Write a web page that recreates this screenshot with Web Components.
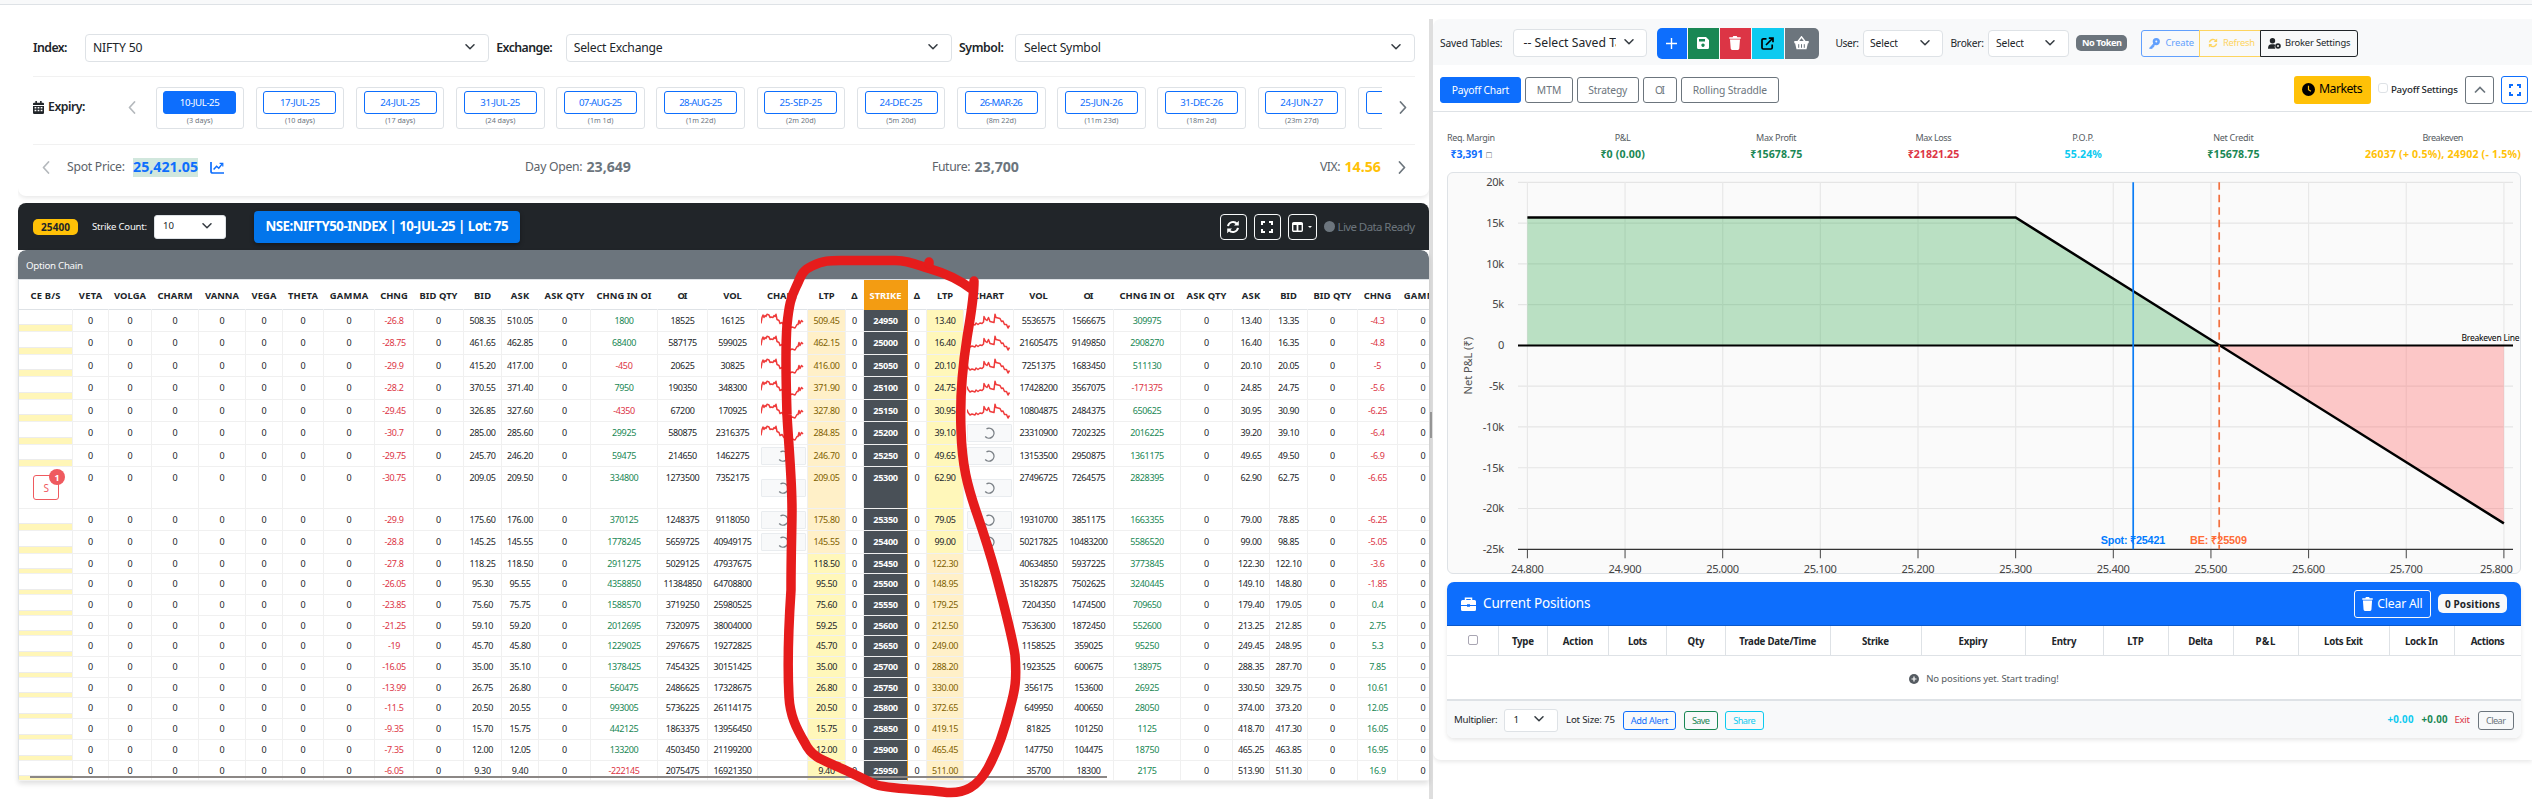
<!DOCTYPE html>
<html lang="en">
<head>
<meta charset="utf-8">
<title>Option Chain</title>
<style>
html,body{margin:0;background:#fff}
body{width:2532px;height:799px;overflow:hidden;font-family:"Noto Sans","Open Sans",sans-serif;color:#212529}
</style>
</head>
<body>
<trading-app></trading-app>
<script>
const BASE = `<style>
*{box-sizing:border-box}
:host{display:block;font-family:"Noto Sans","Open Sans",sans-serif;line-height:1}
.row{display:flex;align-items:center}
.f{display:inline-block;white-space:nowrap;letter-spacing:0}
svg{display:block;flex:none}
b{font-weight:700}
</style>`;

/* Tightens or loosens tracking so that a label fills the width named in data-w. */
function fit(root){
  root.querySelectorAll('[data-w]').forEach(el=>{
    const n = el.textContent.length, w = +el.dataset.w;
    if(n < 2) return;
    const nat = el.getBoundingClientRect().width;
    const ls = (w - nat) / (n - 1);
    el.style.letterSpacing = ls + 'px';
    el.style.marginRight = -ls + 'px';
  });
}
const t = (text,w,style='') => `<span class="f" data-w="${w}" style="${style}">${text}</span>`;

class Base extends HTMLElement{
  connectedCallback(){
    if(this.shadowRoot) return;
    const r = this.attachShadow({mode:'open'});
    r.innerHTML = BASE + this.view();
    fit(r);
  }
  view(){ return ''; }
}
const ICON = {
  calendar:`<svg width="11" height="13" viewBox="0 0 448 512" preserveAspectRatio="none" fill="currentColor"><path fill-rule="evenodd" d="M96 0h64v64h128V0h64v64h48q48 0 48 48v48H0v-48q0-48 48-48h48zM0 192h448v272q0 48-48 48H48q-48 0-48-48zm64 48v56h72v-56zm124 0v56h72v-56zm124 0v56h72v-56zM64 344v56h72v-56zm124 0v56h72v-56zm124 0v56h72v-56z"/></svg>`,
  chart:`<svg width="14" height="12" viewBox="0 0 14 12" fill="none" stroke="#0d6efd" stroke-width="1.7"><path d="M1 0v9.2q0 1.8 1.8 1.8H14"/><path d="M3.6 7.6l3-3.4 2.2 2 3.4-4.3" stroke-width="1.5"/><path d="M9.6 1.4h3.2v3.2" stroke-width="1.2"/></svg>`,
  refresh:`<svg width="14" height="14" viewBox="0 0 14 14" fill="none" stroke="currentColor" stroke-width="2"><path d="M2 6.1A5.1 5.1 0 0 1 11 3.9M12 7.9A5.1 5.1 0 0 1 3 10.1"/><path d="M12.8.8v4.7H8zM1.2 13.2V8.500H6z" fill="currentColor" stroke="none"/></svg>`,
  expand:`<svg width="12" height="12" viewBox="0 0 12 12" fill="none" stroke="currentColor" stroke-width="2"><path d="M1 4V1h3M8 1h3v3M11 8v3H8M4 11H1V8"/></svg>`,
  columns:`<svg width="11" height="10" viewBox="0 0 11 10"><rect x=".7" y=".7" width="9.600" height="8.600" rx="1" fill="none" stroke="#fff" stroke-width="1.4"/><path d="M.5 2h10M5.500 1v8" stroke="#fff" stroke-width="1.8"/></svg>`,
  chev:`<svg width="10" height="6" viewBox="0 0 10 6" fill="none" stroke="#343a40" stroke-width="1.5" stroke-linecap="round" stroke-linejoin="round"><path d="M1 .8l4 4 4-4"/></svg>`,
  trash:(w,h)=>`<svg width="${w}" height="${h}" viewBox="0 0 12 14" fill="currentColor" preserveAspectRatio="none"><path d="M.3 1.200h3.300L4.300 0h3.400l.7 1.200h3.300v1.600H.3zM1 3.600h10l-.7 9q-.1 1.400-1.500 1.400H3.200q-1.400 0-1.500-1.400z"/></svg>`
};
const arrow = (dir,color)=>`<svg width="8" height="13" viewBox="0 0 8 13" fill="none" stroke="${color}" stroke-width="1.700" stroke-linejoin="round" stroke-linecap="round"><path d="${dir==='l'?'M6.500 1L1.500 6.500l5 5.500':'M1.500 1l5 5.500-5 5.500'}"/></svg>`;

class DropSelect extends Base{
  view(){ const a=k=>this.getAttribute(k);
    return `<style>
      :host{height:${a('h')}px;width:${a('w')}px;border:1px solid #dee2e6;border-radius:${a('rad')||4}px;background:#fff;flex:none}
      .row{height:100%;padding:0 ${a('pr')}px 0 ${a('pl')}px;justify-content:space-between;font-size:${a('fs')}px;color:#212529}
      .clip{overflow:hidden;max-width:${a('clip')||400}px;white-space:nowrap;line-height:1.5}
      svg{margin-top:-2px}
    </style><div class="row"><div class="clip">${t(a('label'),a('tw'))}</div>${ICON.chev}</div>`; }
}
customElements.define('drop-select',DropSelect);

class MarketSelector extends Base{
  view(){
    const exp=[['10-JUL-25','(3 days)'],['17-JUL-25','(10 days)'],['24-JUL-25','(17 days)'],['31-JUL-25','(24 days)'],['07-AUG-25','(1m 1d)'],['28-AUG-25','(1m 22d)'],['25-SEP-25','(2m 20d)'],['24-DEC-25','(5m 20d)'],['26-MAR-26','(8m 22d)'],['25-JUN-26','(11m 23d)'],['31-DEC-26','(18m 2d)'],['24-JUN-27','(23m 27d)'],['','']];
    return `<style>
      :host{height:177px;margin-left:18px;padding:15px 14px 0 15px;border-radius:0 0 8px 8px;box-shadow:0 2px 4px rgba(0,0,0,.09);clip-path:inset(0 0 -10px 0)}
      .top{height:28px;font-size:12.300px;font-weight:600}
      .top drop-select{font-weight:400}
      .exp{margin-top:14px;height:69px;border-top:1px solid #f1f1f1;border-bottom:1px solid #f1f1f1;padding-bottom:6px}
      .exp .lab{font-size:12.300px;font-weight:600;margin-left:4px}
      .strip{display:flex;gap:11.600px;width:1226px;overflow:hidden;margin-left:20px}
      .card{flex:none;width:88.600px;height:42px;border:1px solid #dee2e6;border-radius:3px;padding-top:3px;text-align:center;font-size:7.200px;color:#6c757d}
      .btn{width:73px;height:23px;margin:0 auto 3px;border:1px solid #0d6efd;border-radius:3px;color:#0d6efd;font-size:9.700px;display:flex;align-items:center;justify-content:center;padding-top:2px}
      .on{background:#0d6efd;color:#fff}
      .stats{height:42px;padding-top:3px;font-size:12.200px;color:#5c636a}
      .vals{display:flex;justify-content:space-between;align-items:center;width:1314px;margin-left:17px}
      .vals b{font-size:14.200px;margin-left:4px}
      .hl{background:#d1e7dd;color:#0d6efd;height:19px;display:inline-flex;align-items:center;margin-left:8px!important}
    </style>
    <div class="row top">${t('Index:',34.5)}<drop-select style="margin-left:17.500px" h="28" w="404" fs="12.2" pl="7" pr="13" label="NIFTY 50" tw="49.5"></drop-select>
      <span style="width:7.500px"></span>${t('Exchange:',56.5)}<drop-select style="margin-left:13px" h="28" w="386" fs="12.2" pl="7" pr="13" label="Select Exchange" tw="89"></drop-select>
      <span style="width:7.500px"></span>${t('Symbol:',45)}<drop-select style="margin-left:11px" h="28" w="400" fs="12.2" pl="8" pr="13" label="Select Symbol" tw="77"></drop-select></div>
    <div class="row exp">${ICON.calendar}<span class="lab">${t('Expiry:',37.5)}</span><span style="width:42px"></span>${arrow('l','#b5b9bd')}
      <div class="strip">${exp.map((e,i)=>`<div class="card"><div class="btn ${i?'':'on'}">${t(e[0],e[0].includes('JUL')?40:43)}</div>${e[1]}</div>`).join('')}</div>
      <span style="width:17px"></span>${arrow('r','#6c757d')}</div>
    <div class="row stats"><span style="width:9px"></span>${arrow('l','#b5b9bd')}
      <div class="vals">
        <div class="row">${t('Spot Price:',58)}<b class="hl">${t('25,421.05',65)}</b><span style="width:12px"></span>${ICON.chart}</div>
        <div class="row">${t('Day Open:',57.5)}<b style="color:#6c757d">${t('23,649',44.5)}</b></div>
        <div class="row">${t('Future:',38.5)}<b style="color:#6c757d">${t('23,700',44.5)}</b></div>
        <div class="row">${t('VIX:',20.5)}<b style="color:#ffc107">${t('14.56',36.5)}</b></div>
      </div><span style="width:17px"></span>${arrow('r','#6c757d')}</div>`;
  }
}
customElements.define('market-selector',MarketSelector);

class ChainToolbar extends Base{
  view(){ return `<style>
      :host{height:47px;margin:7px 0 0 18px;background:#212529;border-radius:8px 8px 0 0}
      .row{height:46px;padding:1px 14px 0 15px}
      .badge{width:45px;height:16px;border-radius:5px;background:#ffc107;color:#212529;font-size:10px;font-weight:700;display:flex;align-items:center;justify-content:center}
      .title{width:266px;height:32px;border-radius:4px;background:#0275eb;color:#fff;font-size:13.300px;font-weight:700;display:flex;align-items:center;justify-content:center;margin-left:28px;box-shadow:0 2px 4px rgba(0,0,0,.35)}
      .ib{width:27px;height:26px;border:1px solid #f8f9fa;border-radius:4px;color:#fff;display:flex;align-items:center;justify-content:center;margin-right:7px}
      .dot{width:11px;height:11px;border-radius:50%;background:#6c757d;margin:0 3px 0 0}
    </style><div class="row"><span class="badge">${t('25400',29)}</span>
      <span style="margin-left:14px;color:#f8f9fa;font-size:9.500px">${t('Strike Count:',55)}</span>
      <drop-select style="margin-left:7px" h="24" w="72" rad="3" fs="9.6" pl="8" pr="13" label="10" tw="11"></drop-select>
      <span class="title">${t('NSE:NIFTY50-INDEX | 10-JUL-25 | Lot: 75',243)}</span>
      <span style="flex:1"></span><span class="ib">${ICON.refresh}</span><span class="ib">${ICON.expand}</span>
      <span class="ib" style="width:29px">${ICON.columns}<i style="border:2px solid transparent;border-top:2px solid #fff;margin:3px 0 0 5px"></i></span>
      <span class="dot"></span><span style="font-size:11.500px;color:#6c757d">${t('Live Data Ready',77.5)}</span></div>`; }
}
customElements.define('chain-toolbar',ChainToolbar);

const COLS=[['CE B/S',54,30],['VETA',36,23.5],['VOLGA',43,32],['CHARM',47,35],['VANNA',47,34],['VEGA',37,25],['THETA',41,30],['GAMMA',51,38.5],['CHNG',39,27.5],['BID QTY',50,38],['BID',38,17],['ASK',37,18.5],['ASK QTY',52,40],['CHNG IN OI',67,55],['OI',50,10],['VOL',50,18.5],['CHART',50,31],['LTP',38,16],['Δ',18,7],['STRIKE',44,32],['Δ',19,7],['LTP',37,16],['CHART',50,31],['VOL',50,18.5],['OI',50,10],['CHNG IN OI',67,55],['ASK QTY',52,40],['ASK',37,18.5],['BID',38,16.5],['BID QTY',50,38],['CHNG',40,27.5],['GAMMA',51,38.5]];
const DATA=`24950 22 -26.8 508.35 510.05 1800 18525 16125 509.45 13.40 5536575 1566675 309975 13.40 13.35 -4.3
25000 23 -28.75 461.65 462.85 68400 587175 599025 462.15 16.40 21605475 9149850 2908270 16.40 16.35 -4.8
25050 22 -29.9 415.20 417.00 -450 20625 30825 416.00 20.10 7251375 1683450 511130 20.10 20.05 -5
25100 23 -28.2 370.55 371.40 7950 190350 348300 371.90 24.75 17428200 3567075 -171375 24.85 24.75 -5.6
25150 22 -29.45 326.85 327.60 -4350 67200 170925 327.80 30.95 10804875 2484375 650625 30.95 30.90 -6.25
25200 23 -30.7 285.00 285.60 29925 580875 2316375 284.85 39.10 23310900 7202325 2016225 39.20 39.10 -6.4
25250 22 -29.75 245.70 246.20 59475 214650 1462275 246.70 49.65 13153500 2950875 1361175 49.65 49.50 -6.9
25300 42 -30.75 209.05 209.50 334800 1273500 7352175 209.05 62.90 27496725 7264575 2828395 62.90 62.75 -6.65
25350 22 -29.9 175.60 176.00 370125 1248375 9118050 175.80 79.05 19310700 3851175 1663355 79.00 78.85 -6.25
25400 23 -28.8 145.25 145.55 1778245 5659725 40949175 145.55 99.00 50217825 10483200 5586520 99.00 98.85 -5.05
25450 20 -27.8 118.25 118.50 2911275 5029125 47937675 118.50 122.30 40634850 5937225 3773845 122.30 122.10 -3.6
25500 21 -26.05 95.30 95.55 4358850 11384850 64708800 95.50 148.95 35182875 7502625 3240445 149.10 148.80 -1.85
25550 21 -23.85 75.60 75.75 1588570 3719250 25980525 75.60 179.25 7204350 1474500 709650 179.40 179.05 0.4
25600 20 -21.25 59.10 59.20 2012695 7320975 38004000 59.25 212.50 7536300 1872450 552600 213.25 212.85 2.75
25650 21 -19 45.70 45.80 1229025 2976675 19272825 45.70 249.00 1158525 359025 95250 249.45 248.95 5.3
25700 21 -16.05 35.00 35.10 1378425 7454325 30151425 35.00 288.20 1923525 600675 138975 288.35 287.70 7.85
25750 20 -13.99 26.75 26.80 560475 2486625 17328675 26.80 330.00 356175 153600 26925 330.50 329.75 10.61
25800 21 -11.5 20.50 20.55 993005 5736225 26114175 20.50 372.65 649950 400650 28050 374.00 373.20 12.05
25850 21 -9.35 15.70 15.75 442125 1863375 13956450 15.75 419.15 81825 101250 1125 418.70 417.30 16.05
25900 21 -7.35 12.00 12.05 133200 4503450 21199200 12.00 465.45 147750 104475 18750 465.25 463.85 16.95
25950 20 -6.05 9.30 9.40 -222145 2075475 16921350 9.40 511.00 35700 18300 2175 513.90 511.30 16.9`.split('\n').map(l=>l.split(' '));

class OptionChain extends Base{
  view(){
    const sparkCE='M0 10L1 4 2 1.500 3 4 4 2 5 3 6 .8 8 1.500 9 4 10 3.500 12 4 13 2 14 3 15 .8 16 6 18 7 19 10 21 9 23 12 26 12 29 14.500 31 13.500 34 14.500 36 11 37 11 38 7 39 10 40.500 7 42 8.500';
    const sparkPE='M0 6L1 9 3 11.500 5 10.500 8 11.500 9 9.500 11 11 13 9.500 15 10 16.500 8.500 17 3 18.500 6 20 7 21.500 4 23 8 25 8.500 27 9 28 .8 29 4 31 4.500 33 5 34.500 8 36 7.500 37.500 11 39.500 11 41 14.500 42.500 12';
    const spark=d=>`<svg width="44" height="16" viewBox="0 -.5 44 16" fill="none" stroke="#ef3b3b" stroke-width="1.5" stroke-linejoin="round"><path d="${d}"/></svg>`;
    const load=`<div class="load"><svg width="12" height="12" viewBox="0 0 12 12" fill="none" stroke="#7b8086" stroke-width="1.4"><path d="M3.500 1.800A5 5 0 1 1 2.200 9.500"/></svg></div>`;
    const signed=v=>`<span style="color:${v[0]==='-'?'#dc3545':'#198754'}">${v}</span>`;
    const W=i=>`width:${COLS[i][1]}px`;
    const rows=DATA.map((d,r)=>{
      const [k,h,chg,bid,ask,coi,oi,vol,ltp,pl,pv,poi,pcoi,pask,pbid,pchg]=d;
      const ceItm=r<10, tall=k==='25300';
      const c=['',0,0,0,0,0,0,0,signed(chg),0,bid,ask,0,signed(coi),oi,vol,
        r<6?spark(sparkCE):r<10?load:'',ltp,0,k,0,pl,r<5?spark(sparkPE):r<10?load:'',
        pv,poi,signed(pcoi),0,pask,pbid,0,signed(pchg),0];
      return `<div class="r" style="height:${h}px">`+c.map((v,i)=>{
        let cls='c';
        if(i===16||i===22) cls+=' mid';
        if(i===17) cls+=ceItm?' itm':' otm';
        if(i===21) cls+=ceItm?' otm':' itm';
        if(i===19) cls+=' strike';
        if(i===0) return `<div class="c bs" style="${W(i)}">`+(tall?`<span class="sell">S<i>1</i></span>`:`<u style="height:${r<10?7:5}px"></u>`)+`</div>`;
        return `<div class="${cls}" style="${W(i)};padding-top:${i===16||i===22?0:r<10?6:5}px">${v}</div>`;
      }).join('')+`</div>`;
    }).join('');
    return `<style>
      :host{margin-left:18px;width:1411px;overflow:hidden;box-shadow:0 3px 5px rgba(0,0,0,.12);position:relative;border-radius:8px 8px 3px 3px;height:531px}
      .cap{height:29px;background:#6c757d;color:#f8f9fa;font-size:9.700px;padding:0 8px;display:flex;align-items:center;border-radius:8px 8px 0 0;padding-top:2px}
      .tbl{border-left:1px solid #dee2e6;border-top:1px solid #dee2e6;width:1411px;overflow:hidden;font-size:9px;letter-spacing:-.37px}
      .r{display:flex;width:1430px}
      .c{flex:none;border-right:1px solid #f0f0f0;border-bottom:1px solid #f0f0f0;text-align:center;overflow:visible;height:100%;white-space:nowrap}
      .h{height:30px}.h .c{font-weight:700;font-size:9.400px;border-right-color:transparent;border-bottom-color:#dee2e6;padding-top:10.500px}
      .h .hs{background:#f39c12;color:#fff;border-color:#f39c12}
      .mid{display:flex;align-items:center;justify-content:center}
      .itm{background:#fff0c8;color:#806000}.otm{background:#fff7ba}
      .strike{background:#495057;color:#fff;font-weight:700;font-size:9.200px;border-right-color:#f39c12}
      .bs{display:flex;flex-direction:column;justify-content:flex-end;align-items:center}
      .bs u{display:block;width:100%;background:#fff6b8;border-top:1px solid #ececec}
      .load{width:45px;height:18px;border:1px solid #e9ecef;background:#f8f9fa;display:flex;align-items:center;justify-content:center;border-radius:1px;margin-left:1px}
      .sell{width:26px;height:25px;border:1px solid #ef5a5f;border-radius:3px;color:#ef5a5f;font-size:10px;display:flex;align-items:center;justify-content:center;position:relative;margin:0 0 8px 1px}
      .sell i{position:absolute;top:-7px;right:-7px;width:16px;height:16px;border-radius:50%;background:#ef5a5f;color:#fff;font:700 9px/17px "Noto Sans",sans-serif;text-align:center}
      .bar{position:absolute;left:12px;top:526px;width:1077px;height:2px;background:#8b8785}
    </style><div class="cap">${t('Option Chain',57)}</div>
    <div class="tbl"><div class="r h">${COLS.map((c,i)=>`<div class="c ${i===19?'hs':''}" style="width:${c[1]}px">${t(c[0],c[2])}</div>`).join('')}</div>${rows}</div><div class="bar"></div>`;
  }
}
customElements.define('option-chain',OptionChain);

class BrokerBar extends Base{
  view(){
    return `<style>
      :host{height:46px;background:#f8f9fa;border-radius:8px 0 0 0}
      .row{height:46px;padding:2px 0 0 7px;font-size:10.200px}
      .g{display:flex;gap:1px;margin-left:9.500px;height:31px;border-radius:5px;overflow:hidden}
      .g span{display:flex;align-items:center;justify-content:center;color:#fff}
      .no{width:51px;height:16px;border-radius:5px;background:#6c757d;color:#fff;font-size:9.200px;font-weight:700;display:flex;align-items:center;justify-content:center;margin:-1px 14px 0 7.500px}
      .o{height:27px;border:1px solid;display:flex;align-items:center;font-size:9.400px;gap:5px;padding-left:8px;margin-right:-1px}
    </style><div class="row">${t('Saved Tables:',62.5)}
      <drop-select style="margin:0 0 0 11px" h="28" w="134" fs="12.2" pl="9" pr="12" clip="93" label="-- Select Saved Table --" tw="127"></drop-select>
      <div class="g"><span style="width:30px;background:#0d6efd"><svg width="11" height="11" stroke="#fff" stroke-width="1.4"><path d="M5.500 0v11M0 5.500h11"/></svg></span>
      <span style="width:31px;background:#198754"><svg width="12" height="12" viewBox="0 0 12 12" fill="#fff"><path fill-rule="evenodd" d="M1.500 0H9l3 3v7.500Q12 12 10.500 12h-9Q0 12 0 10.500v-9Q0 0 1.500 0zM2 2v2.500h6V2zM6 6.500a1.700 1.700 0 1 0 .01 0z"/></svg></span>
      <span style="width:31px;background:#dc3545">${ICON.trash(12,14)}</span>
      <span style="width:32px;background:#0dcaf0"><svg width="13" height="13" viewBox="0 0 13 13" fill="none" stroke="#000" stroke-width="1.700"><path d="M5.500 1.800H2.300q-1.300 0-1.300 1.300v7.600Q1 12 2.300 12h7.600q1.300 0 1.300-1.300V7.500M5 8L11.500 1.500M7.800 1.100h4.200v4.200"/></svg></span>
      <span style="width:34px;background:#6c757d"><svg width="15" height="14" viewBox="0 0 15 14"><path d="M4 5.500L7.500.8 11 5.500" fill="none" stroke="#fff" stroke-width="1.400"/><path fill="#fff" d="M.3 5h14.400v2.200h-.8L12.500 13.300h-10L1.100 7.200H.3z"/><path d="M4.700 8.200v3.600M7.500 8.200v3.600M10.300 8.200v3.600" stroke="#6c757d"/></svg></span></div>
      <span style="width:16.500px"></span>${t('User:',23.5)}<drop-select style="margin:1px 0 0 4px" h="27" w="80" fs="10.3" pl="6" pr="12" label="Select" tw="28"></drop-select>
      <span style="width:7.500px"></span>${t('Broker:',33.5)}<drop-select style="margin:1px 0 0 4px" h="27" w="81" fs="10.3" pl="7" pr="13" label="Select" tw="28"></drop-select>
      <span class="no">${t('No Token',40)}</span>
      <span class="o" style="width:58.500px;color:#62a0fd;border-radius:3px 0 0 3px;padding-left:7px"><svg width="11" height="11" viewBox="0 0 11 11"><circle cx="7.300" cy="3.600" r="2.300" fill="none" stroke="currentColor" stroke-width="2.600"/><path d="M5.500 4.800L.5 10.300h2.700V9H4.700V7.500l1.500-1" fill="currentColor" stroke="currentColor"/></svg>${t('Create',28.5)}</span>
      <span class="o" style="width:62px;color:#fdd45f"><svg width="10" height="10" viewBox="0 0 14 14" fill="none" stroke="currentColor" stroke-width="2"><path d="M2 6.100A5.100 5.100 0 0 1 11 3.900M12 7.900A5.100 5.100 0 0 1 3 10.100"/><path d="M12.800.8v4.700H8zM1.200 13.200V8.500H6z" fill="currentColor" stroke="none"/></svg>${t('Refresh',32)}</span>
      <span class="o" style="width:98px;color:#212529;border-radius:0 3px 3px 0;padding-left:7px;gap:4px"><svg width="13" height="11" viewBox="0 0 13 11" fill="currentColor"><circle cx="4.500" cy="2.800" r="2.700"/><path d="M0 10.700Q0 6.300 3.500 6.300h2.500q.8 0 1.200.4-1.200 2 .2 4z"/><circle cx="10" cy="8" r="1.900" fill="none" stroke="currentColor" stroke-width="1.800"/></svg>${t('Broker Settings',65.5)}</span>
    </div>`; }
}
customElements.define('broker-bar',BrokerBar);

class PayoffTabs extends Base{
  view(){ return `<style>
      :host{height:47px;border-bottom:1px solid #dee2e6}
      .row{padding:5px 4px 2px 7px;gap:4.300px;height:46px}
      .tab{height:26px;border:1px solid #6c757d;border-radius:3px;color:#6c757d;font-size:10.300px;display:flex;align-items:center;justify-content:center;padding-top:1px}
      .on{background:#0d6efd;border-color:#0d6efd;color:#fff}
      .mk{width:77px;height:28px;border-radius:3px;background:#ffc107;color:#000;font-size:12.300px;display:flex;align-items:center;justify-content:center;gap:4px}
      .cb{width:10px;height:10px;border:1px solid #dee2e6;border-radius:3px;margin:-3px 0 0 2.500px}
      .sq{height:28px;border:1px solid;border-radius:3px;display:flex;align-items:center;justify-content:center}
    </style><div class="row">
      <span class="tab on" style="width:81px">${t('Payoff Chart',57.5)}</span><span class="tab" style="width:47.500px">${t('MTM',24.5)}</span>
      <span class="tab" style="width:61.500px">${t('Strategy',39)}</span><span class="tab" style="width:34px">${t('OI',10)}</span><span class="tab" style="width:97.500px">${t('Rolling Straddle',74.5)}</span>
      <span style="flex:1"></span>
      <span class="mk"><svg width="13" height="13" viewBox="0 0 13 13"><circle cx="6.500" cy="6.500" r="6.500"/><path d="M6.500 2.800v3.900l2.400 1.600" fill="none" stroke="#ffc107" stroke-width="1.200"/></svg>${t('Markets',43.5)}</span>
      <span class="cb"></span><span style="font-size:9.700px;font-weight:500;margin:0 3px 0 -1px">${t('Payoff Settings',67)}</span>
      <span class="sq" style="width:29px;color:#6c757d"><svg width="12" height="8" fill="none" stroke="#6c757d" stroke-width="1.700"><path d="M1 6.500l5-5 5 5"/></svg></span>
      <span class="sq" style="width:27px;color:#0d6efd;margin-left:2.500px">${ICON.expand}</span></div>`; }
}
customElements.define('payoff-tabs',PayoffTabs);

class PayoffMetrics extends Base{
  view(){
    const m=[['Req. Margin',48,'₹3,391 □',43,'#0d6efd'],['P&amp;L',16,'₹0 (0.00)',44.5,'#198754'],['Max Profit',40.5,'₹15678.75',52,'#198754'],['Max Loss',36,'₹21821.25',51.5,'#dc3545'],['P.O.P.',22,'55.24%',37.3,'#0dcaf0'],['Net Credit',40.5,'₹15678.75',52.2,'#198754'],['Breakeven',41,'26037 (+ 0.5%), 24902 (- 1.5%)',156,'#ffc107']];
    return `<style>:host{padding:21px 11px 0 14px;height:60px}.m{display:flex;justify-content:space-between;text-align:center}
      .m>div{display:flex;flex-direction:column;align-items:center;font-size:9px;color:#555b61}b{font-size:10.600px;margin-top:7px}small{font-size:9px;color:#495057;font-weight:400}</style>
      <div class="m">${m.map(x=>`<div>${t(x[0],x[1])}<b style="color:${x[4]}">${x[2].includes('□')?t('₹3,391',33)+' <small>□</small>':t(x[2],x[3])}</b></div>`).join('')}</div>`; }
}
customElements.define('payoff-metrics',PayoffMetrics);

class PayoffChart extends Base{
  view(){
    const ox=1448, oy=173, X=v=>1527.4+(v-24800)*.9765-ox, Y=v=>345.4-v*.0081556-oy;
    let g='';
    for(let v=-25000;v<=20000;v+=5000){
      if(v>-25000) g+=`<path d="M70 ${Y(v)}H1065" stroke="#e5e5e5" stroke-width="1.200"/>`;
      const s=v?v/1000+'k':'0';
      g+=`<text x="56" y="${Y(v)+3.800}" text-anchor="end" letter-spacing="-.25">${s}</text>`;
    }
    for(let v=24800;v<=25800;v+=100){
      g+=`<path d="M${X(v)} ${Y(20000)}V${Y(-25000)}" stroke="#e8e8e8" stroke-width="1.200"/><path d="M${X(v)} ${Y(-25000)}v9" stroke="#444"/>`;
      g+=`<text x="${X(v)-(v===25800?7.500:0)}" y="400" text-anchor="middle" textLength="33">${v.toLocaleString('en-US')}</text>`;
    }
    return `<style>:host{margin:0 11px 0 14px;height:402px;border:1px solid #dee2e6;border-radius:6px;background:#fafafa;overflow:hidden}
      text{font-family:"Noto Sans",sans-serif;font-size:11.100px;fill:#444}.an{font:700 10.800px "Liberation Sans",sans-serif}</style>
      <svg width="1072" height="401" viewBox="0 0 1072 401">
      ${g}
      <path d="M${X(24800)} ${Y(15678.75)}H${X(25300)}L${X(25509.05)} ${Y(0)}H${X(24800)}z" fill="rgba(40,167,69,.3)"/>
      <path d="M${X(25509.05)} ${Y(0)}L${X(25800)} ${Y(-21821.25)}V${Y(0)}z" fill="rgba(255,107,107,.36)"/>
      <path d="M70 ${Y(-25000)}H1065" stroke="#333" stroke-width="1.200"/>
      <path d="M70 ${Y(0)}H1065" stroke="#000" stroke-width="2"/>
      <path d="M${X(24800)} ${Y(15678.75)}H${X(25300)}L${X(25800)} ${Y(-21821.25)}" fill="none" stroke="#000" stroke-width="2.500"/>
      <path d="M685.200 ${Y(20000)}V${Y(-25000)}" stroke="#0a7cf5" stroke-width="1.700"/>
      <path d="M771.200 ${Y(20000)}V${Y(-25000)}" stroke="#f2703f" stroke-width="1.700" stroke-dasharray="7.500 5"/>
      <text class="an" x="685" y="371" text-anchor="middle" textLength="64.400" style="fill:#007bff">Spot: ₹25421</text>
      <text class="an" x="770.500" y="371" text-anchor="middle" textLength="57" style="fill:#ff6b35">BE: ₹25509</text>
      <text x="1013.500" y="167.500" textLength="58" style="font-size:8.500px;fill:#000">Breakeven Line</text>
      <text transform="translate(24 192.700) rotate(-90)" text-anchor="middle" textLength="57.500" style="fill:#555">Net P&amp;L (₹)</text>
      </svg>`; }
}
customElements.define('payoff-chart',PayoffChart);

class PositionsCard extends Base{
  view(){
    const c=[['',52,0],['Type',49,22],['Action',61,30.5],['Lots',58,19],['Qty',59,17],['Trade Date/Time',104.5,77],['Strike',91,27],['Expiry',104,29],['Entry',78,25],['LTP',65,16.5],['Delta',65,24.5],['P&amp;L',65,20],['Lots Exit',91,39],['Lock In',65,33],['Actions',66.5,34]];
    return `<style>
      :host{margin:8px 11px 0 14px;border-radius:7px;overflow:visible;box-shadow:0 2px 4px rgba(0,0,0,.1)}
      .hd{height:44px;background:#0d6efd;border-bottom:1px solid #0a58ca;border-radius:7px 7px 0 0;color:#fff;padding:1px 14px 0}
      .clr{width:77px;height:28px;border:1px solid #f8f9fa;border-radius:3px;display:flex;align-items:center;justify-content:center;gap:4px;font-size:12.200px}
      .cnt{width:69px;height:19px;margin-left:7px;border-radius:5px;background:#f8f9fa;color:#212529;font-weight:700;font-size:10px;display:flex;align-items:center;justify-content:center;margin-top:-1px}
      .th{display:flex;height:30px;border-bottom:1px solid #dee2e6;font-size:9.700px;font-weight:700}
      .th div{border-right:1px solid #dee2e6;display:flex;align-items:center;justify-content:center;padding-top:3px}
      .th div:last-child{border:0}
      .cb{width:10px;height:10px;border:1px solid #a9a6b3;border-radius:2px;margin-top:-5px}
      .none{height:43px;display:flex;align-items:center;justify-content:center;gap:7px;font-size:9.500px;color:#555b61;padding-top:3px}
      .ft{height:39px;border-top:2px solid #dee2e6;background:#f8f9fa;font-size:9.700px;padding:1px 7px 0;border-radius:0 0 7px 7px}
      .b{height:19px;border:1px solid;border-radius:3px;display:flex;align-items:center;justify-content:center;font-size:9.200px;padding-top:1px}
    </style>
    <div class="row hd"><svg width="15" height="14" viewBox="0 0 15 14"><path d="M4.500 3V1.200h6V3" fill="none" stroke="#fff" stroke-width="1.500"/><path fill="#fff" d="M1.500 3h12Q15 3 15 4.500V8H9V7.200H6V8H0V4.500Q0 3 1.500 3zM0 9h6v.8h3V9h6v3.500q0 1.500-1.500 1.500h-12Q0 14 0 12.500z"/></svg>
      <span style="font-size:13.500px;margin-left:7px">${t('Current Positions',107.5)}</span><span style="flex:1"></span>
      <span class="clr">${ICON.trash(11,14)}${t('Clear All',45.5)}</span><span class="cnt">${t('0 Positions',55)}</span></div>
    <div class="th">${c.map((x,i)=>`<div style="width:${x[1]}px">${i?t(x[0],x[2]):'<span class="cb"></span>'}</div>`).join('')}</div>
    <div class="none"><svg width="10" height="10" viewBox="0 0 10 10"><circle cx="5" cy="5" r="5" fill="#555b61"/><path d="M5 2.500v5M2.500 5h5" stroke="#fff" stroke-width="1.200"/></svg>${t('No positions yet. Start trading!',132.5)}</div>
    <div class="row ft">${t('Multiplier:',43.5)}<drop-select style="margin:0 8px 0 7px" h="23" w="53.5" rad="3" fs="9.8" pl="8" pr="13" label="1" tw="5"></drop-select>${t('Lot Size: 75',49)}
      <span class="b" style="width:53px;color:#0d6efd;margin-left:8px">${t('Add Alert',37.5)}</span><span class="b" style="width:34px;color:#198754;margin-left:8px">${t('Save',18)}</span><span class="b" style="width:39px;color:#0dcaf0;margin-left:7px">${t('Share',22.5)}</span>
      <span style="flex:1"></span><b style="color:#0dcaf0">${t('+0.00',26)}</b><b style="color:#198754;margin-left:8px">${t('+0.00',26)}</b><span style="color:#dc3545;margin-left:7px">${t('Exit',15.5)}</span>
      <span class="b" style="width:36px;color:#6c757d;margin-left:8px">${t('Clear',20)}</span></div>`; }
}
customElements.define('positions-card',PositionsCard);

class PaneDivider extends Base{
  view(){ return `<style>:host{width:4px;background:#dedede;display:flex;justify-content:center}i{width:2px;height:26px;background:#999;margin-top:393px}</style><i></i>`; }
}
customElements.define('pane-divider',PaneDivider);

class MarkerLoop extends Base{
  view(){ return `<style>:host{position:absolute;left:770px;top:245px;pointer-events:none}</style>
    <svg width="270" height="554" viewBox="770 245 270 554" fill="none" stroke="#e61c1c" stroke-width="9.500" stroke-linecap="round" stroke-linejoin="round">
    <path d="M974 281C974 300 969 325 967 338C962 370 960 405 961 430C962 465 967 485 977 514C986 540 990 553 996 575C1004 605 1012 635 1015 655C1017 680 1015 690 1010 708C1004 732 998 750 988 768C978 786 965 795 943 792C920 789 885 789 874 784C858 776 848 771 836 766C822 760 811 756 805 743C796 728 790 715 789 697C787 660 789 620 791 590C791 550 792 530 792 510C792 480 789 450 787 415C786 380 785 350 787 325C789 305 791 297 796 287C801 277 801 271 812 266C825 260 830 260.500 845 260.500H895C908 260.500 915 264 929 268.500C945 273 960 280 973 290"/>
    <path d="M929 264v-2"/></svg>`; }
}
customElements.define('marker-loop',MarkerLoop);

class TradingApp extends Base{
  view(){ return `<style>
    :host{height:799px;overflow:hidden;position:relative}
    .strip{height:5px;background:#f8f9fa;border-bottom:1px solid #dee2e6}
    .main{display:flex;height:780px;margin-top:14px}
    .left{width:1429px}
    .right{flex:1;height:741px;border-radius:0 0 0 8px;box-shadow:0 2px 4px rgba(0,0,0,.09);clip-path:inset(0 0 -10px 0)}
    </style><div class="strip"></div><div class="main">
      <div class="left"><market-selector></market-selector><chain-toolbar></chain-toolbar><option-chain></option-chain></div>
      <pane-divider></pane-divider>
      <div class="right"><broker-bar></broker-bar><payoff-tabs></payoff-tabs><payoff-metrics></payoff-metrics><payoff-chart></payoff-chart><positions-card></positions-card></div>
    </div><marker-loop></marker-loop>`; }
}
customElements.define('trading-app',TradingApp);
</script>
</body>
</html>
